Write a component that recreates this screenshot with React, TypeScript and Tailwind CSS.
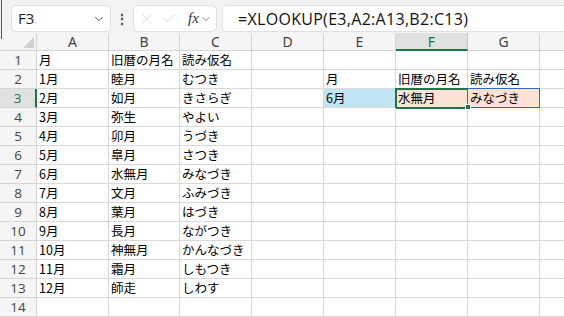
import { ChevronDown, X, Check } from "lucide-react";

const colA = ["月", "1月", "2月", "3月", "4月", "5月", "6月", "7月", "8月", "9月", "10月", "11月", "12月", ""];
const colB = ["旧暦の月名", "睦月", "如月", "弥生", "卯月", "皐月", "水無月", "文月", "葉月", "長月", "神無月", "霜月", "師走", ""];
const colC = ["読み仮名", "むつき", "きさらぎ", "やよい", "うづき", "さつき", "みなづき", "ふみづき", "はづき", "ながつき", "かんなづき", "しもつき", "しわす", ""];

const letters = ["A", "B", "C", "D", "E", "F", "G"];

const cellFont = { fontFamily: '"Noto Sans CJK JP", "Noto Sans", sans-serif' };

function Cell({ text, className = "", children }: { text?: string; className?: string; children?: React.ReactNode }) {
  return (
    <div
      className={`relative h-[19px] border-r border-b border-[#d9d9d9] px-[2px] flex items-end pb-[1px] text-[12.5px] leading-[16px] text-black whitespace-nowrap ${className}`}
      style={cellFont}
    >
      {text}
      {children}
    </div>
  );
}

export default function App() {
  return (
    <div className="w-[564px] h-[317px] overflow-hidden bg-white flex flex-col font-['Noto_Sans',sans-serif]">
      {/* Formula bar */}
      <div className="h-[39px] bg-[#f3f3f3] flex items-start pt-[5px] relative">
        <div className="absolute left-[1px] top-0 w-px h-[39px] bg-[#217346]" />
        <div className="ml-[11px] w-[100px] h-[27px] bg-white rounded-[5px] border border-[#e0e0e0] flex items-center pl-[6px] pr-[4px]">
          <span className="text-[15px] text-[#222] flex-1" style={{ fontFamily: '"Open Sans", sans-serif' }}>F3</span>
          <ChevronDown size={14} strokeWidth={1.5} className="text-[#444]" />
        </div>
        <div className="w-[22px] h-[27px] flex items-center justify-center text-[#555] text-[14px] font-bold">⋮</div>
        <div className="w-[84px] h-[27px] bg-white rounded-[5px] border border-[#e0e0e0] flex items-center pl-[5px]">
          <X size={16} strokeWidth={1} className="text-[#c8c8c8]" />
          <Check size={17} strokeWidth={1} className="text-[#c8c8c8] ml-[6px]" />
          <span className="ml-[10px] text-[15px] italic text-[#333] font-['Liberation_Serif',serif]">fx</span>
          <ChevronDown size={12} strokeWidth={1.5} className="text-[#555] ml-[1px]" />
        </div>
        <div className="ml-[5px] flex-1 h-[27px] bg-white rounded-l-[5px] border border-r-0 border-[#e0e0e0] flex items-center pl-[15px]">
          <span className="text-[16px] text-[#111] tracking-[0.3px]" style={{ fontFamily: '"Open Sans", sans-serif' }}>
            =XLOOKUP(E3,A2:A13,B2:C13)
          </span>
        </div>
      </div>

      {/* Grid */}
      <div className="grid grid-cols-[37px_72px_71px_repeat(5,72px)_1fr]">
        {/* Column header row */}
        <div className="h-[18px] bg-[#f5f5f5] border-r border-b border-[#d4d4d4] flex items-end justify-end p-[2px]">
          <div className="w-0 h-0 border-l-[11px] border-l-transparent border-b-[11px] border-b-[#d0d0d0]" />
        </div>
        {letters.map((l) => (
          <div
            key={l}
            className={
              l === "F"
                ? "h-[18px] bg-[#e1e1e1] border-r border-[#c8c8c8] border-b-2 border-b-[#217346] flex items-center justify-center text-[14px] text-[#217346]"
                : "h-[18px] bg-[#f5f5f5] border-r border-b border-[#d4d4d4] flex items-center justify-center text-[14px] text-[#444]"
            }
          >
            {l}
          </div>
        ))}
        <div className="h-[18px] bg-[#f5f5f5] border-b border-[#d4d4d4]" />

        {colA.map((a, i) => {
          const r = i + 1;
          const e = r === 2 ? "月" : r === 3 ? "6月" : "";
          const f = r === 2 ? "旧暦の月名" : r === 3 ? "水無月" : "";
          const g = r === 2 ? "読み仮名" : r === 3 ? "みなづき" : "";
          return (
            <div key={r} className="contents">
              <div
                className={
                  r === 3
                    ? "h-[19px] bg-[#e1e1e1] border-r-2 border-r-[#217346] border-b border-[#d4d4d4] flex items-center justify-center text-[13.5px] text-[#217346]"
                    : "h-[19px] bg-[#f5f5f5] border-r border-b border-[#d4d4d4] flex items-center justify-center text-[13.5px] text-[#444]"
                }
                style={{ fontFamily: '"Open Sans", sans-serif' }}
              >
                {r}
              </div>
              <Cell text={a} />
              <Cell text={colB[i]} />
              <Cell text={colC[i]} />
              <Cell />
              <Cell text={e} className={r === 3 ? "bg-[#c1e5f5]" : ""} />
              <Cell text={f} className={r === 3 ? "bg-[#fbe2d5]" : ""}>
                {r === 3 && (
                  <>
                    <div className="absolute -left-px -top-px w-[74px] h-[21px] border-2 border-[#217346] pointer-events-none" />
                    <div className="absolute -right-[4px] -bottom-[3px] w-[6px] h-[6px] bg-[#217346] border border-white z-10" />
                  </>
                )}
              </Cell>
              <Cell text={g} className={r === 3 ? "bg-[#fbe2d5]" : ""}>
                {r === 3 && (
                  <div className="absolute -left-px -top-px w-[73px] h-[20px] border border-[#2e69c0] pointer-events-none" />
                )}
              </Cell>
              <div className="h-[19px] border-b border-[#d9d9d9]" />
            </div>
          );
        })}
      </div>
    </div>
  );
}
